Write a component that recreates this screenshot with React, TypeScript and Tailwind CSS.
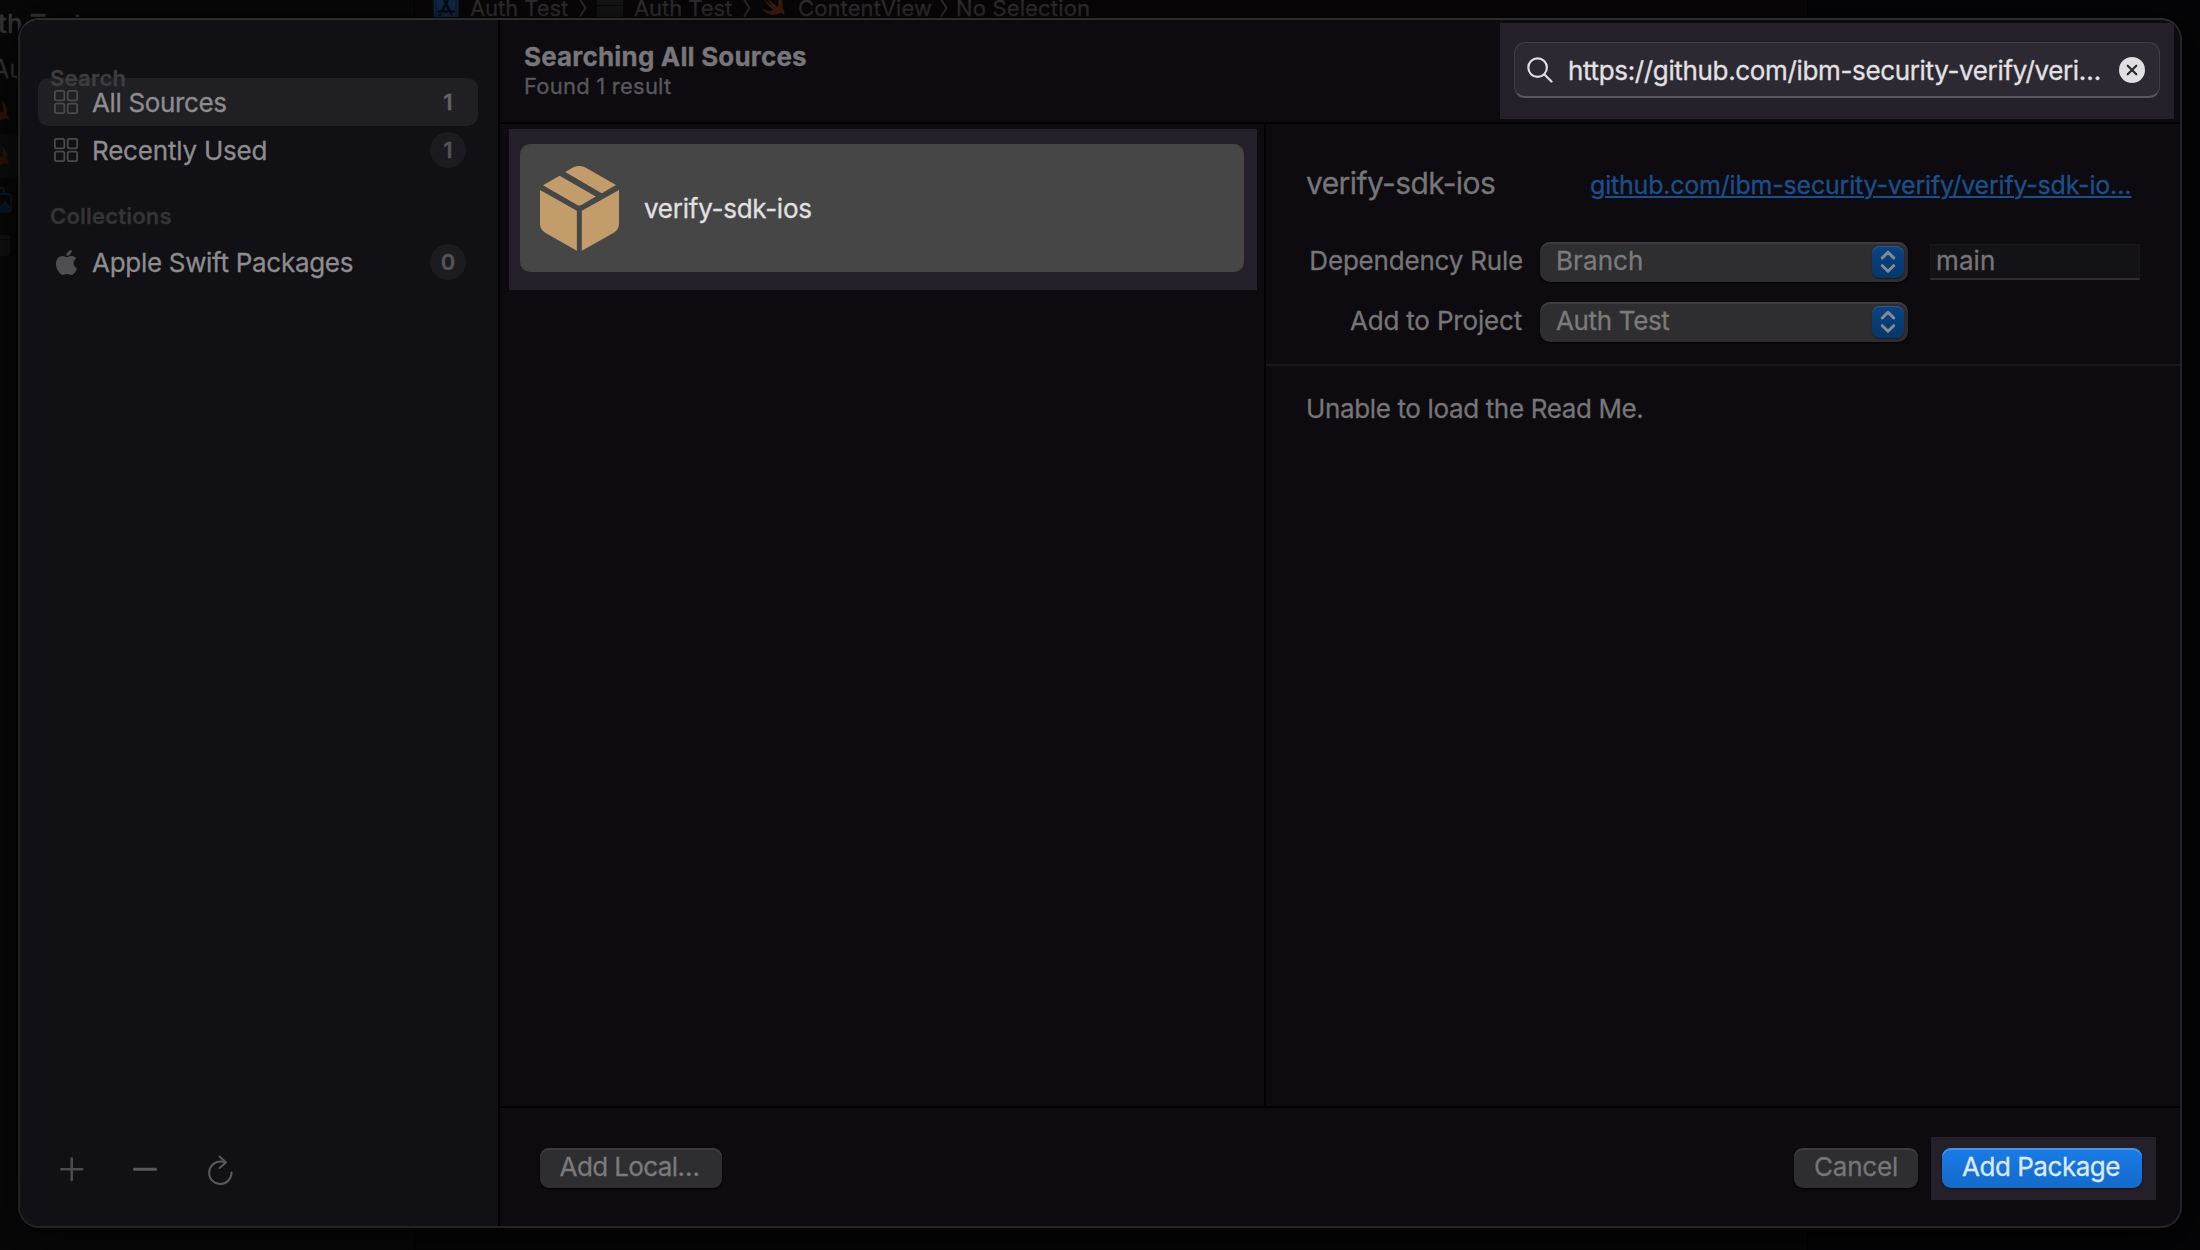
import type { ReactNode } from "react";

function SwiftIcon({ className }: { className: string }) {
  return (
    <svg viewBox="0 0 24 24" className={className} fill="currentColor">
      <path d="M14.2 1.5c4.6 3.3 6.8 8.600 5.600 13.200 1.900 2.400 2.300 5.200 1.500 6.600-1.100-2-3-2.200-4.500-1.400C11.500 22.600 4.600 20.800.8 15.200c3.600 2.500 7.800 3 10.700 1.300C7.800 13.700 4.700 9.900 2.700 6.800c2.900 2.600 6.200 5 7.900 6-2.300-2.500-4.300-5.600-5-7.200 3 3 7.500 6.600 10 8 1.200-3.700.5-8.200-1.400-12.100Z" />
    </svg>
  );
}

function AppStoreIcon() {
  return (
    <svg viewBox="0 0 26 26" className="h-[26px] w-[26px]">
      <rect x="0.500" y="0.500" width="25" height="25" rx="2" fill="#112c4d" />
      <path d="M3 0v26M23 0v26" stroke="#0a1a2e" strokeWidth="1" />
      <g stroke="#070b12" strokeWidth="2.400" strokeLinecap="round" fill="none">
        <path d="M14.500 8 9 18" />
        <path d="M11.500 8 18.500 21.500" />
        <path d="M6.200 18.500h8.300M18 18.500h2.600" />
        <path d="M7.300 21.500l-.4.700" />
      </g>
    </svg>
  );
}

function Crumb({ children, className = "" }: { children: ReactNode; className?: string }) {
  return <span className={`h-7 shrink-0 whitespace-nowrap text-[22px] leading-7 text-[#343335] ${className}`}>{children}</span>;
}

function CrumbChevron({ className }: { className: string }) {
  return (
    <span className={`flex shrink-0 justify-center ${className}`}>
      <svg viewBox="0 0 8 20" className="h-5 w-2" fill="none" stroke="#343335" strokeWidth="1.800">
        <path d="M1 1.500 6.500 10 1 18.500" />
      </svg>
    </span>
  );
}

function EditorBackdrop() {
  return (
    <div className="flex h-full w-full">
      <div className="flex w-[414px] shrink-0 flex-col overflow-hidden bg-[#080809]">
        <p className="-ml-[36px] mt-2 h-8 whitespace-nowrap text-[26px] font-medium leading-8 text-[#39393a]">Auth Test</p>
        <p className="-ml-[8px] mt-[13px] h-8 whitespace-nowrap text-[25px] leading-8 text-[#39393a]">Auth Test</p>
        <SwiftIcon className="-ml-[13px] mt-[14px] h-6 w-6 text-[#2a180c]" />
        <div className="mt-[11px] flex h-11 items-center bg-[#0d0d0e]">
          <SwiftIcon className="-ml-[13px] h-6 w-6 text-[#2c1510]" />
        </div>
        <svg viewBox="0 0 26 26" className="-ml-[14px] mt-[9px] h-[26px] w-[26px]" fill="none" stroke="#0a1a24" strokeWidth="2">
          <path d="M2 7h20a3 3 0 0 1 3 3v12a3 3 0 0 1-3 3H2z" />
          <path d="M12 7V3a2 2 0 0 1 2-2h3l2 6" />
          <path d="M6 25v-3l5-4 4 3 4-6 5 6v3z" fill="#0a1a24" />
        </svg>
        <div className="mt-[22px] flex h-[21px] w-[10px] shrink-0 flex-col gap-px overflow-hidden rounded-r-[3px]">
          <span className="h-1 bg-[#131314]" />
          <span className="flex-1 bg-[#131314]" />
        </div>
      </div>
      <div className="flex w-[1393px] shrink-0 items-start overflow-hidden border-l border-black bg-gradient-to-b from-[#0a0708] to-[#060606]">
        <div className="-mt-[6px] flex h-7 items-center pl-[18px]">
          <span className="-mt-1 h-[26px] w-[26px] shrink-0">
            <AppStoreIcon />
          </span>
          <Crumb className="ml-[11px] w-[98px] tracking-[-0.06px]">Auth Test</Crumb>
          <CrumbChevron className="w-[29px]" />
          <span className="-mt-1 flex h-[26px] w-[26px] shrink-0 flex-col gap-px overflow-hidden rounded-[3px]">
            <span className="h-[12px] bg-[#171718]" />
            <span className="flex-1 bg-[#171718]" />
          </span>
          <Crumb className="ml-[11px] w-[98px] tracking-[-0.06px]">Auth Test</Crumb>
          <CrumbChevron className="w-[29px]" />
          <SwiftIcon className="-mt-[6px] h-[26px] w-[26px] shrink-0 text-[#45200f]" />
          <Crumb className="ml-[11px] w-[133px] tracking-[0.1px]">ContentView</Crumb>
          <CrumbChevron className="w-[25px]" />
          <Crumb className="tracking-[0.15px]">No Selection</Crumb>
        </div>
      </div>
      <div className="flex-1 border-l border-black bg-[#050507]" />
    </div>
  );
}

function GridIcon() {
  return (
    <svg viewBox="0 0 24 24" className="h-6 w-6" fill="none" stroke="#4a494c" strokeWidth="1.800">
      <rect x="0.900" y="0.900" width="9.400" height="9.400" rx="1.600" />
      <rect x="13.700" y="0.900" width="9.400" height="9.400" rx="1.600" />
      <rect x="0.900" y="13.700" width="9.400" height="9.400" rx="1.600" />
      <rect x="13.700" y="13.700" width="9.400" height="9.400" rx="1.600" />
    </svg>
  );
}

function AppleIcon() {
  return (
    <svg viewBox="2.300 0 19.400 24" className="h-[25px] w-[21px]" preserveAspectRatio="none" fill="#4e4d4f">
      <path d="M12.152 6.896c-.948 0-2.415-1.078-3.960-1.040-2.040.027-3.910 1.183-4.961 3.014-2.117 3.675-.546 9.103 1.519 12.090 1.013 1.454 2.208 3.090 3.792 3.039 1.520-.065 2.090-.987 3.935-.987 1.831 0 2.350.987 3.960.948 1.637-.026 2.676-1.480 3.676-2.948 1.156-1.688 1.636-3.325 1.662-3.415-.039-.013-3.182-1.221-3.220-4.857-.026-3.040 2.480-4.494 2.597-4.559-1.429-2.090-3.623-2.324-4.390-2.376-2-.156-3.675 1.090-4.610 1.090zM15.530 3.830c.843-1.012 1.400-2.427 1.245-3.830-1.207.052-2.662.805-3.532 1.818-.78.896-1.454 2.338-1.273 3.714 1.338.104 2.715-.688 3.559-1.701" />
    </svg>
  );
}

interface SourceRowProps {
  icon: ReactNode;
  label: string;
  labelClass: string;
  count: string;
  selected?: boolean;
}

function SourceRow({ icon, label, labelClass, count, selected }: SourceRowProps) {
  return (
    <div className={`ml-[18px] mr-5 flex h-12 shrink-0 items-center rounded-[10px] pl-4 pr-3 ${selected ? "bg-[#201f23]" : ""}`}>
      <span className="flex w-6 justify-center">{icon}</span>
      <span className={`ml-[14px] pt-[2px] text-[26px] leading-8 text-[#8d8c8e] ${labelClass}`}>{label}</span>
      <span
        className={`ml-auto flex h-9 w-9 items-center justify-center rounded-full text-[22px] font-semibold leading-none ${
          selected ? "text-[#656467]" : "bg-[#1b1a1e] text-[#545356]"
        }`}
      >
        {count}
      </span>
    </div>
  );
}

function Sidebar() {
  return (
    <aside className="flex w-[480px] shrink-0 flex-col border-r-2 border-black bg-[#111014]">
      <h2 className="relative z-10 ml-[30px] mt-11 h-7 text-[22px] font-semibold leading-7 tracking-[0.25px] text-[#3d3c40]">Search</h2>
      <div className="-mt-[14px] flex flex-col">
        <SourceRow selected icon={<GridIcon />} label="All Sources" labelClass="tracking-[-0.35px]" count="1" />
        <SourceRow icon={<GridIcon />} label="Recently Used" labelClass="tracking-[-0.2px]" count="1" />
      </div>
      <h2 className="ml-[30px] mt-7 h-7 text-[22px] font-semibold leading-7 tracking-[0.22px] text-[#343337]">Collections</h2>
      <div className="mt-2 flex flex-col">
        <SourceRow icon={<AppleIcon />} label="Apple Swift Packages" labelClass="tracking-[-0.3px]" count="0" />
      </div>
      <div className="mb-10 ml-9 mt-auto flex h-8 items-center">
        <svg viewBox="0 0 32 32" className="h-8 w-8" stroke="#4b4a4d" strokeWidth="2.600" strokeLinecap="round">
          <path d="M5.300 15.300h20.900M15.700 4.600v21.500" />
        </svg>
        <svg viewBox="0 0 32 32" className="ml-[41px] h-8 w-8" stroke="#59585b" strokeWidth="3" strokeLinecap="round">
          <path d="M5.500 15.300h21" />
        </svg>
        <svg viewBox="0 0 32 32" className="ml-[43px] h-8 w-8" fill="none" stroke="#59585b" strokeWidth="2" strokeLinecap="round" strokeLinejoin="round">
          <path d="M27.500 18.400A11.200 11.200 0 1 1 16.300 7.600q3 0 5.200.7" />
          <path d="M15.600 2.600 22 8.400 15.600 14" />
        </svg>
      </div>
    </aside>
  );
}

function PackageIcon() {
  return (
    <svg viewBox="0 0 238 256" className="h-[85px] w-[79px]" fill="#c29c6a">
      <path d="M76 18 102 3q16-6 32 0L229 57 186 82Z" />
      <path d="M59 29 168 92 126 117q-7 5-15 0L9 58Z" />
      <path d="M0 72 111 135V255L17 202Q0 192 0 174Z" />
      <path d="M238 72 126 135V255L221 202Q238 192 238 174Z" />
    </svg>
  );
}

function SearchField() {
  return (
    <div className="mr-[6px] mt-[3px] h-24 w-[674px] bg-[#241f29] px-[14px] pt-[19px]">
      <div className="flex h-14 items-center rounded-[11px] border border-b-2 border-[#403d43] border-b-[#5a575d] bg-[#2d2933]">
        <svg viewBox="0 0 26 26" className="ml-[12px] h-[26px] w-[26px]" fill="none" stroke="#dedde0" strokeWidth="2.200" strokeLinecap="round">
          <circle cx="10.600" cy="10.600" r="9.300" />
          <path d="M17.500 17.500 24.500 24.500" />
        </svg>
        <span className="ml-[15px] whitespace-nowrap pt-[2px] text-[26px] leading-8 tracking-[-0.35px] text-[#e2e1e3]">
          https://github.com/ibm-security-verify/veri…
        </span>
        <svg viewBox="0 0 26 26" className="ml-auto mr-[14px] h-[26px] w-[26px] shrink-0">
          <circle cx="13" cy="13" r="13" fill="#e0dfe1" />
          <path d="M8.700 8.700 17.300 17.300M17.300 8.700 8.700 17.300" stroke="#2d2933" strokeWidth="2.200" strokeLinecap="round" />
        </svg>
      </div>
    </div>
  );
}

function PopUpButton({ label, labelClass }: { label: string; labelClass: string }) {
  return (
    <div className="flex h-10 w-[368px] items-center rounded-[10px] bg-[#2e2d30] pl-4 pr-1 shadow-[inset_0_2px_0_#3d3c3f,0_1px_2px_#000]">
      <span className={`pb-[3px] text-[26px] leading-8 text-[#7b7a7c] ${labelClass}`}>{label}</span>
      <span className="ml-auto flex h-8 w-8 items-center justify-center rounded-[8px] bg-gradient-to-b from-[#0a4384] to-[#073768] shadow-[inset_0_1px_0_#2a578c,0_1px_1px_#1a191c]">
        <svg viewBox="0 0 16 24" className="h-6 w-4" fill="none" stroke="#838b96" strokeWidth="3" strokeLinecap="round" strokeLinejoin="round">
          <path d="M2.300 7.900 8 2.300 13.700 7.900" />
          <path d="M2.300 15.700 8 21.300 13.700 15.700" />
        </svg>
      </span>
    </div>
  );
}

function DetailPane() {
  return (
    <section className="flex flex-1 flex-col">
      <div className="ml-10 mt-[41px] flex h-9 items-baseline">
        <h2 className="w-[284px] whitespace-nowrap text-[30px] leading-9 tracking-[-0.6px] text-[#767577]">verify-sdk-ios</h2>
        <a className="whitespace-nowrap text-[25px] leading-8 tracking-[-0.2px] text-[#1b4f8c] underline decoration-2 underline-offset-2">
          github.com/ibm-security-verify/verify-sdk-io…
        </a>
      </div>
      <div className="ml-10 mt-[41px] flex flex-col gap-5">
        <div className="flex h-10 items-center">
          <span className="w-[217px] pb-[3px] text-right text-[26px] leading-8 tracking-[-0.2px] text-[#767577]">Dependency Rule</span>
          <div className="ml-[17px]">
            <PopUpButton label="Branch" labelClass="tracking-[0.08px]" />
          </div>
          <div className="ml-[22px] h-9 w-[210px] border border-b-2 border-[#17161a] border-b-[#2e2d31] bg-[#131216] pl-[5px]">
            <span className="block text-[26px] leading-8 tracking-[0.1px] text-[#767577]">main</span>
          </div>
        </div>
        <div className="flex h-10 items-center">
          <span className="w-[216px] pb-[3px] text-right text-[26px] leading-8 tracking-[-0.18px] text-[#767577]">Add to Project</span>
          <div className="ml-[18px]">
            <PopUpButton label="Auth Test" labelClass="tracking-[-0.35px]" />
          </div>
        </div>
      </div>
      <div className="mt-[22px] h-[2px] bg-[#18171b]" />
      <p className="ml-[40px] mt-[27px] text-[26px] leading-8 tracking-[-0.36px] text-[#767577]">Unable to load the Read Me.</p>
    </section>
  );
}

function Footer() {
  return (
    <footer className="flex h-[120px] shrink-0 items-start border-t-2 border-black pl-10 pr-6">
      <button className="mt-10 flex h-10 w-[182px] items-center justify-center rounded-[9px] bg-[#2e2d30] pb-[3px] pr-[3px] text-[26px] leading-8 tracking-[-0.6px] text-[#7b7a7c] shadow-[inset_0_2px_0_#3d3c3f,0_1px_2px_#000]">
        Add Local…
      </button>
      <button className="ml-auto mt-10 flex h-10 w-[124px] items-center justify-center rounded-[9px] bg-[#2e2d30] pb-[3px] text-[26px] leading-8 tracking-[-0.19px] text-[#767577] shadow-[inset_0_2px_0_#3d3c3f,0_1px_2px_#000]">
        Cancel
      </button>
      <div className="ml-[13px] mt-[29px] h-[63px] w-[225px] bg-[#241f29] pl-[11px] pt-[11px]">
        <button className="flex h-10 w-[200px] items-center justify-center rounded-[9px] bg-gradient-to-b from-[#1a7ce8] to-[#136aca] pb-[3px] pr-[2px] text-[26px] leading-8 tracking-[-0.47px] text-[#dce9f9] shadow-[inset_0_2px_0_#4694ec,0_1px_2px_#15121a]">
          Add Package
        </button>
      </div>
    </footer>
  );
}

function AddPackageDialog() {
  return (
    <div className="absolute left-[18px] top-[18px] flex h-[1210px] w-[2164px] overflow-hidden rounded-[21px] border-2 border-[#242326] border-t-[#2d2c2f] bg-[#0d0b0f] shadow-[0_0_0_1px_#000,0_10px_50px_10px_rgba(0,0,0,0.6)]">
      <Sidebar />
      <main className="flex flex-1 flex-col">
        <header className="flex h-[104px] shrink-0 items-start justify-between border-b-2 border-black">
          <div className="ml-6 mt-[21px]">
            <h1 className="text-[26px] font-bold leading-8 tracking-[0.17px] text-[#777678]">Searching All Sources</h1>
            <p className="-mt-px text-[22px] leading-7 tracking-[0.22px] text-[#59585b]">Found 1 result</p>
          </div>
          <SearchField />
        </header>
        <div className="flex flex-1">
          <section className="w-[766px] shrink-0 border-r-2 border-black pl-[9px] pt-[5px]">
            <div className="h-[161px] w-[748px] bg-[#241f29] pl-[11px] pt-[15px]">
              <div className="flex h-32 w-[724px] items-center rounded-[10px] bg-[#464646] pl-5">
                <PackageIcon />
                <span className="ml-[25px] pt-[2px] text-[26px] leading-8 tracking-[-0.25px] text-[#e1e1e1]">verify-sdk-ios</span>
              </div>
            </div>
          </section>
          <DetailPane />
        </div>
        <Footer />
      </main>
    </div>
  );
}

export default function App() {
  return (
    <div className="relative h-[1250px] w-[2200px] overflow-hidden bg-[#050506] font-['Inter',sans-serif] [-webkit-text-stroke:0.3px]">
      <EditorBackdrop />
      <AddPackageDialog />
    </div>
  );
}
